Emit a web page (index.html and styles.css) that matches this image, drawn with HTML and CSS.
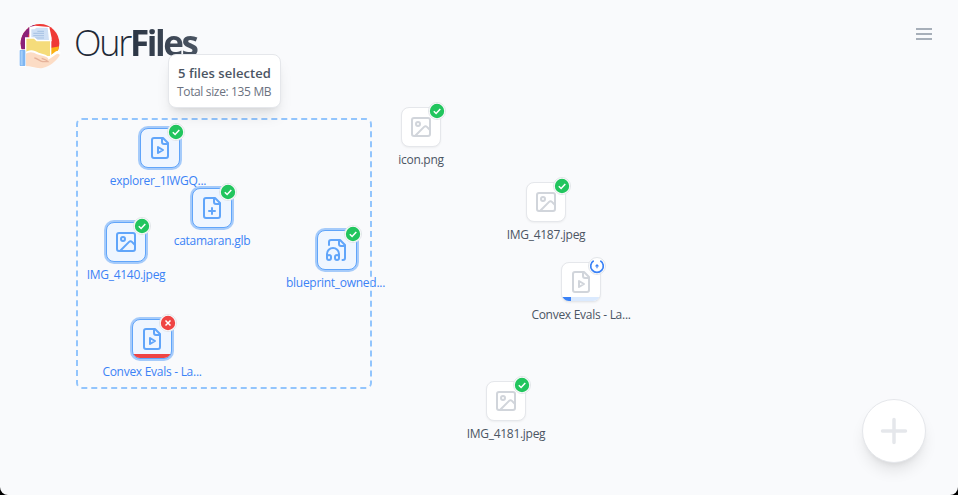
FILE: index.html
```html
<!DOCTYPE html>
<html lang="en">
<head>
<meta charset="utf-8">
<title>OurFiles</title>
<link rel="stylesheet" href="styles.css">
</head>
<body>
<svg class="defs" aria-hidden="true">
  <symbol id="image" viewBox="0 0 24 24"><rect x="3" y="3" width="18" height="18" rx="2"/><circle cx="9" cy="9" r="2"/><path d="m21 15-3.086-3.086a2 2 0 0 0-2.828 0L6 21"/></symbol>
  <symbol id="video" viewBox="0 0 24 24"><path d="M15 2H6a2 2 0 0 0-2 2v16a2 2 0 0 0 2 2h12a2 2 0 0 0 2-2V7Z"/><path d="M14 2v4a2 2 0 0 0 2 2h4"/><path d="m10 11 5 3-5 3v-6Z"/></symbol>
  <symbol id="plus-file" viewBox="0 0 24 24"><path d="M15 2H6a2 2 0 0 0-2 2v16a2 2 0 0 0 2 2h12a2 2 0 0 0 2-2V7Z"/><path d="M14 2v4a2 2 0 0 0 2 2h4"/><path d="M9 15h6M12 18v-6"/></symbol>
  <symbol id="audio" viewBox="0 0 24 24"><path d="M17.5 22h.5a2 2 0 0 0 2-2V7l-5-5H6a2 2 0 0 0-2 2v3"/><path d="M14 2v4a2 2 0 0 0 2 2h4"/><path d="M2 19a2 2 0 1 1 4 0v1a2 2 0 1 1-4 0v-4a6 6 0 0 1 12 0v4a2 2 0 1 1-4 0v-1a2 2 0 1 1 4 0"/></symbol>
  <symbol id="ok" viewBox="1 1 16 16"><circle cx="9" cy="9" r="7.2" fill="#22c55e"/><path d="m5.800 9.200 2.300 2.300 4.200-4.600" fill="none" stroke="#fff" stroke-width="1.5"/></symbol>
  <symbol id="error" viewBox="1 1 16 16"><circle cx="9" cy="9" r="7.2" fill="#ef4444"/><path d="m6.500 6.500 5 5m0-5-5 5" fill="none" stroke="#fff" stroke-width="1.5"/></symbol>
  <symbol id="uploading" viewBox="1 1 16 16"><path d="M12.300 3.700a6.300 6.300 0 1 1-6.600 0" fill="none" stroke="#3b82f6" stroke-width="1.700"/><path d="M9 11.300V8M7.500 9.300 9 7.800l1.500 1.500" fill="none" stroke="#3b82f6" stroke-width="1.100"/></symbol>
</svg>
<main class="app">
  <header class="header">
    <div class="brand">
      <svg class="logo" viewBox="0 0 180 180">
        <defs><clipPath id="disc"><circle cx="90" cy="85" r="58"/></clipPath></defs>
        <g clip-path="url(#disc)">
          <path d="M30 25h120v120H30z" fill="#ef3935"/>
          <path d="M25 20h42l8 15-20 25-5 75H25z" fill="#8b2179"/>
          <path d="M50 112 150 94v50H80z" fill="#fbb116"/>
        </g>
        <path d="m58 36 17-4 43 4 7 33v10H58z" fill="#fff"/>
        <path d="M64 43h10l5-5h34l4 37v35H64z" fill="#cfe0f5"/>
        <path d="M70 55h32M70 62h32M70 69h32M82 49h20" stroke="#9dbbe0" stroke-width="2.5"/>
        <path d="M45 67h29l9 8h41v62H45z" fill="#fff"/>
        <path d="M49 71h23l8 8h40v44H49z" fill="#f5dc7b"/>
        <path d="M43 114c14-12 28-10 43-1l20 6 10 6 22-16c8-5 18 1 12 9-11 17-30 39-55 42-20 2-34-7-52-7z" fill="#fff"/>
        <path d="M44 119c12-10 25-9 37-1l22 6c9 3 13 6 12 10l25-17c5-3 12 1 8 6-11 17-29 31-50 36-19 3-33-6-54-6z" fill="#fcdcc5"/>
        <path d="M73 129c9 0 16 10 25 11h16c-5-6-13-8-19-10" fill="none" stroke="#e6b29a" stroke-width="4"/>
        <rect x="27" y="103" width="21" height="52" rx="2" fill="#fff"/>
        <rect x="29" y="105" width="17" height="48" rx="2" fill="#7fb6f2"/>
        <path d="M32 107h6v44h-6z" fill="#a4cef9"/>
      </svg>
      <h1 class="title"><span class="light">Our</span><span class="bold">Files</span></h1>
    </div>
    <svg class="menu" viewBox="0 0 24 24"><path d="M4 7h16M4 12h16M4 17h16"/></svg>
  </header>

  <section class="canvas">
    <div class="file selected explorer"><div class="tile"><svg class="icon"><use href="#video"/></svg></div><svg class="badge"><use href="#ok"/></svg><span class="name">explorer_1IWGQ...</span></div>
    <div class="file selected catamaran"><div class="tile"><svg class="icon"><use href="#plus-file"/></svg></div><svg class="badge"><use href="#ok"/></svg><span class="name">catamaran.glb</span></div>
    <div class="file selected img4140"><div class="tile"><svg class="icon"><use href="#image"/></svg></div><svg class="badge"><use href="#ok"/></svg><span class="name">IMG_4140.jpeg</span></div>
    <div class="file selected blueprint"><div class="tile"><svg class="icon"><use href="#audio"/></svg></div><svg class="badge"><use href="#ok"/></svg><span class="name">blueprint_owned...</span></div>
    <div class="file selected convex-failed"><div class="tile"><svg class="icon"><use href="#video"/></svg><div class="bar failed"></div></div><svg class="badge"><use href="#error"/></svg><span class="name">Convex Evals - La...</span></div>
    <div class="file iconpng"><div class="tile"><svg class="icon"><use href="#image"/></svg></div><svg class="badge"><use href="#ok"/></svg><span class="name">icon.png</span></div>
    <div class="file img4187"><div class="tile"><svg class="icon"><use href="#image"/></svg></div><svg class="badge"><use href="#ok"/></svg><span class="name">IMG_4187.jpeg</span></div>
    <div class="file convex-uploading"><div class="tile"><svg class="icon"><use href="#video"/></svg><div class="bar"><div class="fill" style="width:23%"></div></div></div><svg class="badge"><use href="#uploading"/></svg><span class="name">Convex Evals - La...</span></div>
    <div class="file img4181"><div class="tile"><svg class="icon"><use href="#image"/></svg></div><svg class="badge"><use href="#ok"/></svg><span class="name">IMG_4181.jpeg</span></div>
    <div class="selection"></div>
    <div class="tooltip"><strong>5 files selected</strong><span>Total size: 135 MB</span></div>
  </section>

  <button class="add" aria-label="Add file"><svg viewBox="0 0 32 32"><path d="M16 4.500v23M4.500 16h23"/></svg></button>
</main>
</body>
</html>
```
FILE: styles.css
```css
* { box-sizing: border-box; }
html { background: #000; }
body { margin: 0; font-family: "Open Sans", "Noto Sans", sans-serif; }
.defs { position: absolute; width: 0; height: 0; }
.app {
  position: relative;
  height: 495px;
  overflow: hidden;
  background: #f9fafc;
  border-radius: 0 0 8px 8px;
}
.header {
  display: flex;
  justify-content: space-between;
  align-items: flex-start;
  padding: 15px 22px 0 10px;
}
.brand { display: flex; align-items: flex-start; gap: 4px; }
.logo { width: 60px; height: 60px; }
.title {
  margin: 4px 0 0;
  font-size: 36px;
  line-height: 48px;
  font-weight: 300;
  white-space: nowrap;
  color: #1f2937;
}
.light { letter-spacing: -2.3px; }
.bold {
  font-weight: 700;
  font-size: 35px;
  letter-spacing: -2.4px;
  padding-right: 3px;
  background: linear-gradient(90deg, #2b3544, #4b5563);
  background-clip: text;
  -webkit-background-clip: text;
  color: transparent;
}
.menu {
  width: 24px;
  height: 24px;
  margin-top: 7px;
  fill: none;
  stroke: #a7afb9;
  stroke-width: 2;
}
.canvas { position: absolute; inset: 0; }
.file {
  position: absolute;
  width: 40px;
  display: flex;
  flex-direction: column;
  align-items: center;
  color: #4b5563;
}
.tile {
  position: relative;
  width: 40px;
  height: 40px;
  display: grid;
  place-items: center;
  overflow: hidden;
  background: #fff;
  border: 1px solid #e5e7eb;
  border-radius: 8px;
  box-shadow: 0 1px 2px rgb(0 0 0 / 5%);
}
.icon {
  width: 24px;
  height: 24px;
  fill: none;
  stroke: #d1d5db;
  stroke-width: 2;
  stroke-linecap: round;
  stroke-linejoin: round;
}
.badge {
  position: absolute;
  top: -5px;
  left: 27px;
  width: 18px;
  height: 18px;
  background: #fff;
  border: 1px solid #e2e5e9;
  border-radius: 50%;
}
.name {
  margin-top: 5px;
  font-size: 12px;
  line-height: 16px;
  letter-spacing: -0.28px;
  white-space: nowrap;
}
.selected { color: #3b82f6; }
.selected .tile {
  background: #eff6ff;
  border-color: #60a5fa;
  box-shadow: 0 0 0 2px #a6cbfa;
}
.selected .icon { stroke: #60a5fa; }
.bar {
  position: absolute;
  left: 0;
  right: 0;
  bottom: 0;
  height: 4px;
  background: #dbeafe;
}
.bar.failed { background: #ef4444; }
.fill { height: 100%; background: #3b82f6; }
.explorer { left: 140px; top: 128px; }
.explorer .name { margin-right: 4px; }
.catamaran { left: 192px; top: 188px; }
.img4140 { left: 106px; top: 222px; }
.blueprint { left: 317px; top: 230px; }
.blueprint .name { margin-right: 3px; }
.convex-failed { left: 132px; top: 319px; }
.iconpng { left: 401px; top: 107px; }
.img4187 { left: 526px; top: 182px; }
.convex-uploading { left: 561px; top: 262px; }
.img4181 { left: 486px; top: 381px; }
.selection {
  position: absolute;
  left: 76px;
  top: 118px;
  width: 296px;
  height: 271px;
  border: 2px dashed #93c5fd;
  border-radius: 6px;
}
.tooltip {
  position: absolute;
  left: 168px;
  top: 54px;
  width: 113px;
  height: 54px;
  padding: 9px 0 0 9px;
  display: flex;
  flex-direction: column;
  white-space: nowrap;
  background: #fff;
  border: 1px solid #e5e7eb;
  border-radius: 8px;
  box-shadow: 0 10px 15px -3px rgb(0 0 0 / 10%), 0 4px 6px -4px rgb(0 0 0 / 10%);
}
.tooltip strong {
  font-size: 13px;
  line-height: 19px;
  font-weight: 600;
  letter-spacing: 0.05px;
  color: #4b5563;
}
.tooltip span {
  margin-left: -1px;
  font-size: 12px;
  line-height: 17px;
  letter-spacing: -0.35px;
  color: #6b7280;
}
.add {
  position: absolute;
  right: 32px;
  bottom: 32px;
  width: 64px;
  height: 64px;
  padding: 0;
  display: grid;
  place-items: center;
  background: #fff;
  border: 1px solid #e5e7eb;
  border-radius: 50%;
  box-shadow: 0 10px 15px -3px rgb(0 0 0 / 10%), 0 4px 6px -4px rgb(0 0 0 / 10%);
}
.add svg {
  width: 32px;
  height: 32px;
  fill: none;
  stroke: #e5e7eb;
  stroke-width: 3.5;
  stroke-linecap: round;
}
```
